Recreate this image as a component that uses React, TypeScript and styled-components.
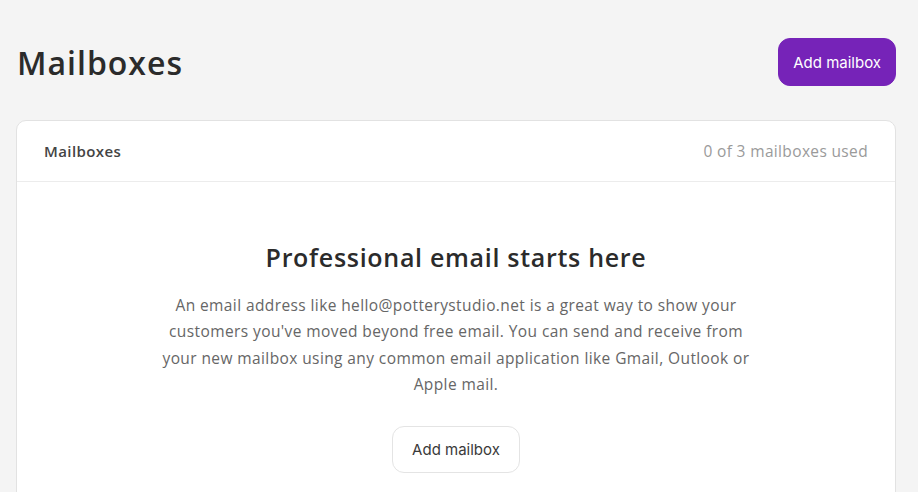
import React from "react";
import styled, { createGlobalStyle } from "styled-components";

const Global = createGlobalStyle`
  html, body { margin: 0; padding: 0; background: #f4f4f4; }
  body { font-family: "Open Sans", Roboto, sans-serif; color: #2a2a2a; }
  * { box-sizing: border-box; }
`;

const Page = styled.div`
  padding: 38px 22px 0 16px;
  display: flex;
  flex-direction: column;
  gap: 34px;
`;

const TopBar = styled.div`
  display: flex;
  align-items: center;
  justify-content: space-between;
`;

const Title = styled.h1`
  margin: 0 0 0 1px;
  font-family: "Open Sans", sans-serif;
  font-size: 32px;
  font-weight: 600;
  letter-spacing: 1px;
  color: #2b2b2b;
`;

const Button = styled.button<{ $primary?: boolean }>`
  font-family: Inter, sans-serif;
  font-size: 15px;
  font-weight: 400;
  height: ${(p) => (p.$primary ? "48px" : "47px")};
  padding: 0 ${(p) => (p.$primary ? "14px" : "19px")};
  border-radius: 12px;
  cursor: pointer;
  border: 1px solid ${(p) => (p.$primary ? "#7623b8" : "#e4e4e4")};
  background: ${(p) => (p.$primary ? "#7623b8" : "#ffffff")};
  color: ${(p) => (p.$primary ? "#ffffff" : "#3a3a3a")};
`;

const Card = styled.section`
  background: #fff;
  border: 1px solid #e2e2e2;
  border-radius: 10px;
  overflow: hidden;
`;

const CardHeader = styled.div`
  height: 61px;
  display: flex;
  align-items: center;
  justify-content: space-between;
  padding: 0 27px 0 27px;
  border-bottom: 1px solid #ececec;
`;

const HeaderLabel = styled.span`
  font-size: 15px;
  font-weight: 600;
  letter-spacing: 0.4px;
  color: #444;
`;

const HeaderMeta = styled.span`
  font-size: 15.5px;
  letter-spacing: 0.35px;
  color: #9a9a9a;
`;

const Empty = styled.div`
  display: flex;
  flex-direction: column;
  align-items: center;
  padding: 58px 0 60px;
  text-align: center;
`;

const EmptyTitle = styled.h2`
  margin: 0;
  font-size: 25px;
  font-weight: 600;
  letter-spacing: 0.7px;
  color: #2b2b2b;
`;

const EmptyText = styled.p`
  margin: 18px 0 28px;
  width: 592px;
  font-size: 15.5px;
  line-height: 26.4px;
  letter-spacing: 0.4px;
  color: #666;
`;

export default function App() {
  return (
    <>
      <Global />
      <Page>
        <TopBar>
          <Title>Mailboxes</Title>
          <Button $primary>Add mailbox</Button>
        </TopBar>
        <Card>
          <CardHeader>
            <HeaderLabel>Mailboxes</HeaderLabel>
            <HeaderMeta>0 of 3 mailboxes used</HeaderMeta>
          </CardHeader>
          <Empty>
            <EmptyTitle>Professional email starts here</EmptyTitle>
            <EmptyText>
              An email address like hello@potterystudio.net is a great way to show your
              customers you've moved beyond free email. You can send and receive from
              your new mailbox using any common email application like Gmail, Outlook or
              Apple mail.
            </EmptyText>
            <Button>Add mailbox</Button>
          </Empty>
        </Card>
      </Page>
    </>
  );
}
